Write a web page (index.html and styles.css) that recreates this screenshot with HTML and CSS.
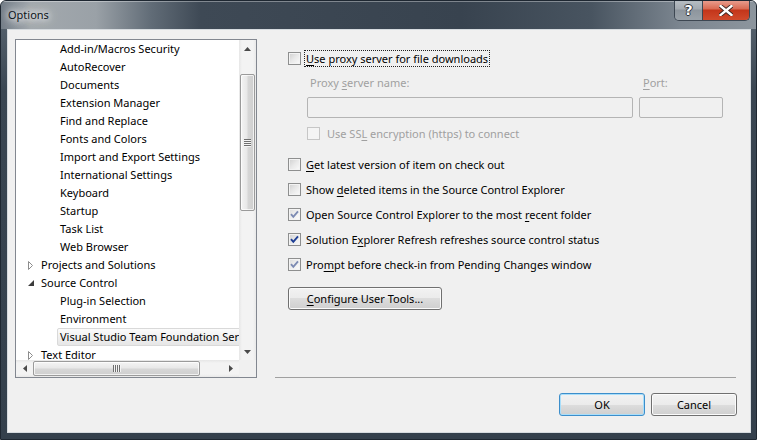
FILE: index.html
```html
<!DOCTYPE html>
<html lang="en">

<head>
    <meta charset="UTF-8">
    <title>Options</title>
    <link rel="stylesheet" href="styles.css">
</head>

<body>
    <div class="window">
        <div class="titlebar">
            <span class="title">Options</span>
            <div class="captionButtons">
                <div class="capBtn helpBtn">?</div>
                <div class="capBtn closeBtn">
                    <svg width="14" height="11" viewBox="0 0 14 11">
                        <path d="M1.5 1 L12.5 10 M12.5 1 L1.5 10" stroke="#3a2420" stroke-width="4.2" stroke-linecap="square" fill="none"/>
                        <path d="M1.5 1 L12.5 10 M12.5 1 L1.5 10" stroke="#fff" stroke-width="2.4" stroke-linecap="square" fill="none"/>
                    </svg>
                </div>
            </div>
        </div>

        <div class="client">
            <div class="main">
                <div class="tree">
                    <div class="treeItems">
                        <div class="node child"><span class="nodeText">Add-in/Macros Security</span></div>
                        <div class="node child"><span class="nodeText">AutoRecover</span></div>
                        <div class="node child"><span class="nodeText">Documents</span></div>
                        <div class="node child"><span class="nodeText">Extension Manager</span></div>
                        <div class="node child"><span class="nodeText">Find and Replace</span></div>
                        <div class="node child"><span class="nodeText">Fonts and Colors</span></div>
                        <div class="node child"><span class="nodeText">Import and Export Settings</span></div>
                        <div class="node child"><span class="nodeText">International Settings</span></div>
                        <div class="node child"><span class="nodeText">Keyboard</span></div>
                        <div class="node child"><span class="nodeText">Startup</span></div>
                        <div class="node child"><span class="nodeText">Task List</span></div>
                        <div class="node child"><span class="nodeText">Web Browser</span></div>
                        <div class="node top">
                            <span class="expander"><svg width="6" height="9" viewBox="0 0 6 9"><path d="M0.5 0.5 L4.5 4.5 L0.5 8.5 Z" fill="#fff" stroke="#8c8c8c"/></svg></span>
                            <span class="nodeText">Projects and Solutions</span>
                        </div>
                        <div class="node top">
                            <span class="expander"><svg width="6" height="6" viewBox="0 0 6 6"><path d="M6 0 L6 6 L0 6 Z" fill="#3c3c3c"/></svg></span>
                            <span class="nodeText">Source Control</span>
                        </div>
                        <div class="node child"><span class="nodeText">Plug-in Selection</span></div>
                        <div class="node child"><span class="nodeText">Environment</span></div>
                        <div class="node child"><span class="nodeText selected">Visual Studio Team Foundation Server</span></div>
                        <div class="node top">
                            <span class="expander"><svg width="6" height="9" viewBox="0 0 6 9"><path d="M0.5 0.5 L4.5 4.5 L0.5 8.5 Z" fill="#fff" stroke="#8c8c8c"/></svg></span>
                            <span class="nodeText">Text Editor</span>
                        </div>
                    </div>

                    <div class="vScroll">
                        <div class="sbArrow"><svg width="7" height="4" viewBox="0 0 7 4"><path d="M0 4 L3.5 0 L7 4 Z" fill="#4a4a4a"/></svg></div>
                        <div class="vGap"></div>
                        <div class="vThumb"><div class="vGrip"></div></div>
                        <div class="sbFill"></div>
                        <div class="sbArrow"><svg width="7" height="4" viewBox="0 0 7 4"><path d="M0 0 L7 0 L3.5 4 Z" fill="#4a4a4a"/></svg></div>
                    </div>

                    <div class="hScroll">
                        <div class="sbArrow"><svg width="4" height="7" viewBox="0 0 4 7"><path d="M4 0 L4 7 L0 3.5 Z" fill="#4a4a4a"/></svg></div>
                        <div class="hThumb"><div class="hGrip"></div></div>
                        <div class="sbFill"></div>
                        <div class="sbArrow"><svg width="4" height="7" viewBox="0 0 4 7"><path d="M0 0 L4 3.5 L0 7 Z" fill="#4a4a4a"/></svg></div>
                    </div>

                    <div class="corner"></div>
                </div>

                <div class="page">
                    <div class="check">
                        <span class="box"></span>
                        <span class="focusText"><u>U</u>se proxy server for file downloads</span>
                    </div>

                    <div class="proxyBlock">
                        <div class="fieldLabels">
                            <span class="lblProxy">Proxy <u>s</u>erver name:</span>
                            <span class="lblPort"><u>P</u>ort:</span>
                        </div>
                        <div class="fields">
                            <div class="textBox proxyBox"></div>
                            <div class="textBox portBox"></div>
                        </div>
                        <div class="check disabled ssl">
                            <span class="box"></span>
                            <span>Use SS<u>L</u> encryption (https) to connect</span>
                        </div>
                    </div>

                    <div class="optionList">
                        <div class="check">
                            <span class="box"></span>
                            <span><u>G</u>et latest version of item on check out</span>
                        </div>
                        <div class="check">
                            <span class="box"></span>
                            <span>Show <u>d</u>eleted items in the Source Control Explorer</span>
                        </div>
                        <div class="check">
                            <span class="box faded"><svg width="11" height="11" viewBox="0 0 11 11"><path d="M2 5.2 L4.3 7.8 L9 2.3" stroke="#7d8bb3" stroke-width="1.9" fill="none"/></svg></span>
                            <span>Open Source Control Explorer to the most <u>r</u>ecent folder</span>
                        </div>
                        <div class="check">
                            <span class="box"><svg width="11" height="11" viewBox="0 0 11 11"><path d="M2 5.2 L4.3 7.8 L9 2.3" stroke="#1f3f95" stroke-width="1.9" fill="none"/></svg></span>
                            <span>Solution E<u>x</u>plorer Refresh refreshes source control status</span>
                        </div>
                        <div class="check">
                            <span class="box faded"><svg width="11" height="11" viewBox="0 0 11 11"><path d="M2 5.2 L4.3 7.8 L9 2.3" stroke="#7d8bb3" stroke-width="1.9" fill="none"/></svg></span>
                            <span>Pro<u>m</u>pt before check-in from Pending Changes window</span>
                        </div>
                    </div>

                    <button class="btn configureBtn"><u>C</u>onfigure User Tools...</button>
                </div>
            </div>

            <div class="footer">
                <button class="btn defaultBtn">OK</button>
                <button class="btn">Cancel</button>
            </div>
        </div>
    </div>
</body>

</html>
```

FILE: styles.css
```css
* {
    box-sizing: border-box;
}

body {
    margin: 0;
    padding: 0;
    background: #ffffff;
    font-family: "Noto Sans", "Liberation Sans", sans-serif;
    font-size: 11px;
    color: #000;
}

u {
    text-decoration: underline;
    text-underline-offset: 2px;
}

.window {
    width: 757px;
    height: 440px;
    display: flex;
    flex-direction: column;
    border: 1px solid #1e2731;
    border-radius: 6px 6px 0 0;
    background: linear-gradient(180deg, #5d6974 0, #3a4652 90px, #34404c 100%);
    overflow: hidden;
}

/* title bar */
.titlebar {
    height: 28px;
    flex: none;
    display: flex;
    align-items: flex-start;
    background: linear-gradient(90deg, #737d87 0, #a3a9ae 30px, #9aa1a7 95px, #616c77 150px, #3e4955 200px, #38434f 460px, #485460 590px, #7c8690 680px, #8c959d 755px);
    box-shadow: inset 0 1px 0 rgba(255, 255, 255, 0.35);
}

.title {
    padding: 6px 0 0 7px;
    line-height: 16px;
    color: #0e1620;
    text-shadow: 0 0 6px #fff, 0 0 10px #fff, 0 0 14px rgba(255, 255, 255, 0.8);
}

.captionButtons {
    margin-left: auto;
    margin-right: 6px;
    margin-top: -1px;
    display: flex;
    border: 1px solid #3d4752;
    border-top: none;
    border-radius: 0 0 5px 5px;
    overflow: hidden;
}

.capBtn {
    height: 20px;
    display: flex;
    align-items: center;
    justify-content: center;
}

.helpBtn {
    width: 28px;
    border-right: 1px solid #3d4752;
    background: linear-gradient(180deg, #b8bfc5 0, #a3aab1 45%, #8d959d 50%, #9aa2a9 100%);
    color: #fff;
    font-family: "DejaVu Sans", sans-serif;
    font-weight: bold;
    font-size: 14px;
    text-shadow: 1px 0 0 #2d3238, -1px 0 0 #2d3238, 0 1px 0 #2d3238, 0 -1px 0 #2d3238;
}

.closeBtn {
    width: 46px;
    background: linear-gradient(180deg, #eaa293 0, #d96a52 45%, #c3351a 50%, #d04a2c 100%);
}

/* client area */
.client {
    flex: 1;
    margin: 0 5px 6px 6px;
    border: 1px solid #d6dbdf;
    background: #f0f0f0;
    padding: 9px 0 0 7px;
    display: flex;
    flex-direction: column;
}

.main {
    display: flex;
    height: 339px;
}

/* tree view */
.tree {
    width: 242px;
    height: 339px;
    border: 1px solid #828790;
    background: #fff;
    display: grid;
    grid-template-columns: 1fr 17px;
    grid-template-rows: 1fr 17px;
}

.treeItems {
    overflow: hidden;
}

.node {
    height: 18px;
    line-height: 18px;
    white-space: nowrap;
    display: flex;
    align-items: center;
}

.node.child {
    padding-left: 41px;
}

.node.top {
    padding-left: 12px;
}

.expander {
    width: 10px;
    height: 18px;
    display: flex;
    align-items: center;
}

.nodeText {
    display: inline-block;
    height: 18px;
    line-height: 16px;
    padding: 0 2px;
    border: 1px solid transparent;
}

.nodeText.selected {
    border-color: #d9d9d9;
    border-radius: 2px;
    background: linear-gradient(180deg, #fbfbfb, #e6e6e6);
    padding-right: 20px;
}

.vScroll {
    display: flex;
    flex-direction: column;
    background: linear-gradient(90deg, #e6e6e6 0, #f3f3f3 3px, #f3f3f3 14px, #e9e9e9 17px);
}

.hScroll {
    display: flex;
    background: linear-gradient(180deg, #e6e6e6 0, #f3f3f3 3px, #f3f3f3 14px, #e9e9e9 17px);
}

.corner {
    background: #f0f0f0;
}

.sbArrow {
    width: 17px;
    height: 17px;
    flex: none;
    display: flex;
    align-items: center;
    justify-content: center;
}

.vGap {
    height: 17px;
}

.sbFill {
    flex: 1;
}

.vThumb {
    height: 137px;
    margin: 0 1px;
    border: 1px solid #9a9a9a;
    border-radius: 2px;
    background: linear-gradient(90deg, #f4f4f4 0, #e8e8e8 45%, #d6d6d6 55%, #cfcfcf 100%);
    box-shadow: inset 0 0 0 1px rgba(255, 255, 255, 0.7);
    display: flex;
    align-items: center;
    justify-content: center;
}

.vGrip {
    width: 7px;
    height: 8px;
    background: repeating-linear-gradient(180deg, #6f6f6f 0 1px, #f4f4f4 1px 2px);
}

.hThumb {
    width: 167px;
    margin: 1px 0;
    border: 1px solid #9a9a9a;
    border-radius: 2px;
    background: linear-gradient(180deg, #f4f4f4 0, #e8e8e8 45%, #d6d6d6 55%, #cfcfcf 100%);
    box-shadow: inset 0 0 0 1px rgba(255, 255, 255, 0.7);
    display: flex;
    align-items: center;
    justify-content: center;
}

.hGrip {
    width: 8px;
    height: 7px;
    background: repeating-linear-gradient(90deg, #6f6f6f 0 1px, #f4f4f4 1px 2px);
}

/* options page */
.page {
    margin-left: 18px;
    width: 461px;
    border-bottom: 1px solid #a0a0a0;
    padding: 11px 0 0 13px;
}

.check {
    display: flex;
    align-items: center;
    height: 17px;
    gap: 5px;
    white-space: nowrap;
}

.box {
    width: 13px;
    height: 13px;
    flex: none;
    border: 1px solid #8e8f8f;
    background: linear-gradient(135deg, #cfcfcf 0, #e9e9e9 50%, #fbfbfb 100%);
    box-shadow: inset 0 0 0 1px #f3f3f3;
    display: flex;
}

.box.faded {
    background: linear-gradient(135deg, #dcdcdc 0, #efefef 50%, #fcfcfc 100%);
}

.focusText {
    margin-left: -2px;
    line-height: 15px;
    padding: 0 1px;
    border: 1px dotted #222;
}

.proxyBlock {
    margin-left: 19px;
}

.fieldLabels {
    display: flex;
    margin-top: 8px;
    height: 16px;
    line-height: 16px;
    color: #a0a0a0;
}

.lblProxy {
    width: 326px;
    padding-left: 3px;
}

.lblPort {
    margin-left: 6px;
    padding-left: 4px;
}

.fields {
    display: flex;
    gap: 6px;
    margin-top: 6px;
}

.textBox {
    height: 21px;
    border: 1px solid #b4b4b4;
    border-radius: 2px;
    background: #f0f0f0;
}

.proxyBox {
    width: 326px;
}

.portBox {
    width: 84px;
}

.check.ssl {
    margin-top: 7px;
    gap: 7px;
}

.check.disabled {
    color: #a0a0a0;
}

.check.disabled .box {
    border-color: #c6c6c6;
    background: #f4f4f4;
    box-shadow: none;
}

.optionList {
    margin-top: 14px;
    display: flex;
    flex-direction: column;
    gap: 8px;
}

/* buttons */
.btn {
    font: inherit;
    color: #000;
    height: 23px;
    padding: 0;
    border: 1px solid #707070;
    border-radius: 3px;
    background: linear-gradient(180deg, #f2f2f2 0, #ebebeb 50%, #dddddd 50%, #cfcfcf 100%);
    box-shadow: inset 0 0 0 1px #fbfbfb;
}

.configureBtn {
    display: block;
    width: 154px;
    margin-top: 14px;
}

.defaultBtn {
    border-color: #3c8ecb;
    box-shadow: inset 0 0 0 1px #a9defa;
}

.footer {
    display: flex;
    justify-content: flex-end;
    gap: 6px;
    padding: 15px 13px 0 0;
}

.footer .btn {
    width: 86px;
}
```
